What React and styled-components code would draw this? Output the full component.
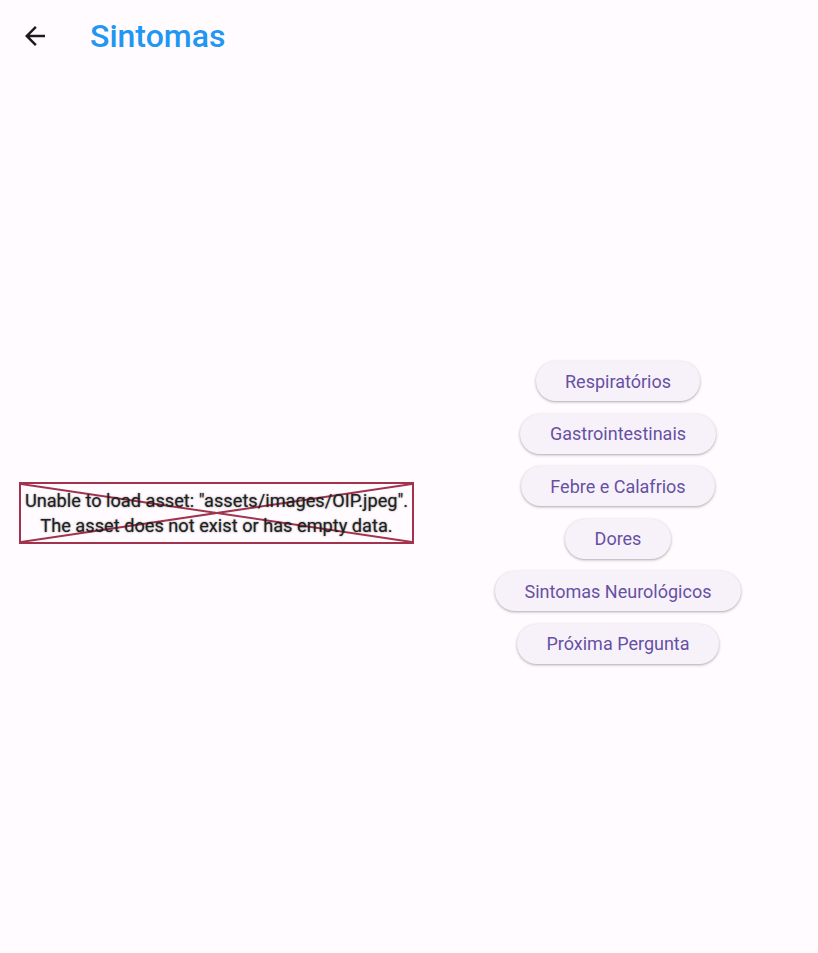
import React from 'react';
import styled, {createGlobalStyle} from 'styled-components';

const GlobalStyle = createGlobalStyle`
    html, body {
        margin: 0;
        padding: 0;
        background: #fffbfe;
        font-family: Roboto, "Liberation Sans", sans-serif;
    }
`

const categories = [
    "Respiratórios",
    "Gastrointestinais",
    "Febre e Calafrios",
    "Dores",
    "Sintomas Neurológicos",
    "Próxima Pergunta",
];

const BackIcon = () => (
    <svg width="30" height="30" viewBox="0 0 24 24">
        <path
            d="M20 11H7.83l5.59-5.59L12 4l-8 8 8 8 1.41-1.41L7.83 13H20v-2z"
            fill="#1d1b20"
        />
    </svg>
);

export default function App() {
    return (
        <Page>
            <GlobalStyle />
            <AppBar>
                <BackButton type="button">
                    <BackIcon />
                </BackButton>
                <Title>Sintomas</Title>
            </AppBar>
            <Body>
                <ErrorBox>
                    <Cross viewBox="0 0 100 100" preserveAspectRatio="none">
                        <line x1="0" y1="0" x2="100" y2="100" />
                        <line x1="100" y1="0" x2="0" y2="100" />
                    </Cross>
                    <ErrorText>
                        Unable to load asset: "assets/images/OIP.jpeg".
                        <br />
                        The asset does not exist or has empty data.
                    </ErrorText>
                </ErrorBox>
                <ButtonColumn>
                    {categories.map((item, index) => (
                        <PillButton key={index} type="button">
                            {item}
                        </PillButton>
                    ))}
                </ButtonColumn>
            </Body>
        </Page>
    )
}

const Page = styled.div`
    width: 818px;
    height: 953px;
    display: flex;
    flex-direction: column;
    background: #fffbfe;
`

const AppBar = styled.header`
    height: 72px;
    display: flex;
    align-items: center;
    padding: 0 0 0 20px;
    box-sizing: border-box;
    flex-shrink: 0;
`

const BackButton = styled.button`
    outline: none;
    border: none;
    background: none;
    padding: 0;
    width: 30px;
    height: 30px;
    display: flex;
    align-items: center;
    justify-content: center;
`

const Title = styled.h1`
    margin: 0 0 0 40px;
    font-size: 32px;
    font-weight: 500;
    color: #2196f3;
    letter-spacing: 0;
`

const Body = styled.main`
    flex: 1;
    display: flex;
    align-items: center;
    padding-left: 19px;
`

const ErrorBox = styled.div`
    position: relative;
    width: 395px;
    height: 62px;
    box-sizing: border-box;
    border: 2px solid #a3334d;
    display: flex;
    align-items: center;
    justify-content: center;
    flex-shrink: 0;
`

const Cross = styled.svg`
    position: absolute;
    inset: 0;
    width: 100%;
    height: 100%;
    stroke: #a3334d;
    stroke-width: 2;

    line {
        vector-effect: non-scaling-stroke;
    }
`

const ErrorText = styled.p`
    position: relative;
    margin: 0;
    font-size: 18.2px;
    line-height: 25px;
    text-align: center;
    white-space: nowrap;
    color: #202020;
    text-shadow: 0 0 2px rgba(0, 0, 0, 0.55);
`

const ButtonColumn = styled.div`
    flex: 1;
    display: flex;
    flex-direction: column;
    align-items: center;
    gap: 12.5px;
    padding-left: 4px;
`

const PillButton = styled.button`
    outline: none;
    border: none;
    height: 40px;
    padding: 0 29.5px;
    border-radius: 20px;
    background-color: #f7f2fa;
    color: #6750a4;
    font-family: Roboto, "Liberation Sans", sans-serif;
    font-size: 18px;
    font-weight: 400;
    box-shadow: rgba(0, 0, 0, 0.2) 0px 1px 2px, rgba(0, 0, 0, 0.1) 0px 1px 3px 1px;
`
